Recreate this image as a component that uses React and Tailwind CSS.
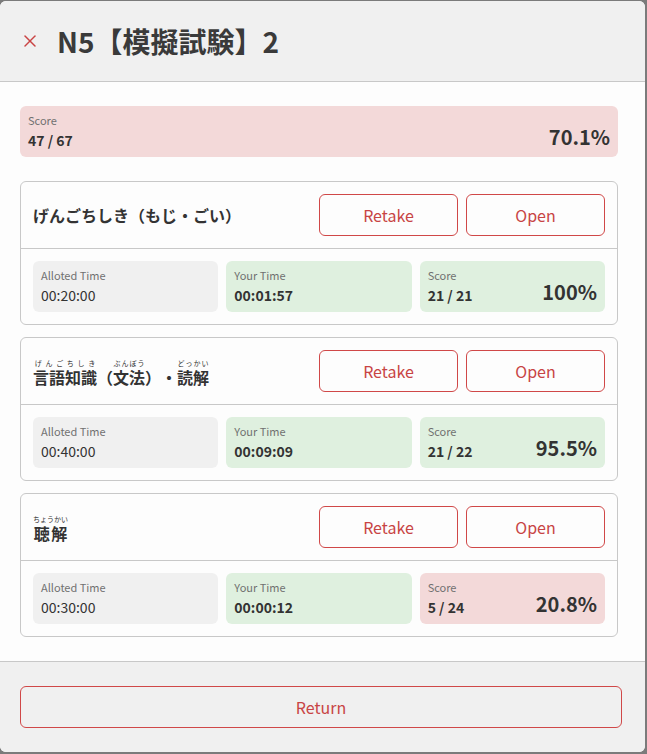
import { X } from 'lucide-react'

const sections = [
  {
    title: <>げんごちしき（もじ・ごい）</>,
    allotted: '00:20:00',
    yours: '00:01:57',
    score: '21 / 21',
    pct: '100%',
    pass: true,
  },
  {
    title: (
      <>
        <ruby>言語知識<rt>げんごちしき</rt></ruby>（<ruby>文法<rt>ぶんぽう</rt></ruby>）・<ruby>読解<rt>どっかい</rt></ruby>
      </>
    ),
    allotted: '00:40:00',
    yours: '00:09:09',
    score: '21 / 22',
    pct: '95.5%',
    pass: true,
  },
  {
    title: (
      <>
        <ruby>聴解<rt>ちょうかい</rt></ruby>
      </>
    ),
    allotted: '00:30:00',
    yours: '00:00:12',
    score: '5 / 24',
    pct: '20.8%',
    pass: false,
  },
]

function StatBox({ label, bg, children }) {
  return (
    <div className={`rounded-md px-2 pt-[7px] pb-[6px] h-[51px] ${bg}`}>
      <p className="text-[11px] leading-[14px] text-[#707070]">{label}</p>
      {children}
    </div>
  )
}

function ScoreRow({ score, pct }) {
  return (
    <div className="flex items-end justify-between -mt-[3px]">
      <p className="text-[14px] leading-[20px] font-bold text-[#333]">{score}</p>
      <p className="text-[20px] leading-[26px] font-bold text-[#333]">{pct}</p>
    </div>
  )
}

function Section({ s }) {
  return (
    <div className="rounded-md border border-[#c8c8c8] bg-[#fdfdfd]">
      <div className="flex items-center justify-between h-[67px] px-3 border-b border-[#c8c8c8]">
        <h3 className="text-[16px] font-bold text-[#333] leading-none [text-spacing-trim:space-all] [&_rt]:text-[7px] [&_rt]:font-normal [&_rt]:leading-[9px] [&_rt]:pb-[1px]">
          {s.title}
        </h3>
        <div className="flex gap-2">
          <button className="w-[139px] h-[42px] rounded-md border border-[#d04848] text-[#c84444] text-[16px]">Retake</button>
          <button className="w-[139px] h-[42px] rounded-md border border-[#d04848] text-[#c84444] text-[16px]">Open</button>
        </div>
      </div>
      <div className="grid grid-cols-3 gap-2 p-3">
        <StatBox label="Alloted Time" bg="bg-[#f0f0f0]">
          <p className="text-[14px] leading-[20px] mt-[3px] text-[#333]">{s.allotted}</p>
        </StatBox>
        <StatBox label="Your Time" bg="bg-[#dff0df]">
          <p className="text-[14px] leading-[20px] mt-[3px] font-bold text-[#333]">{s.yours}</p>
        </StatBox>
        <StatBox label="Score" bg={s.pass ? 'bg-[#dff0df]' : 'bg-[#f3d9d9]'}>
          <ScoreRow score={s.score} pct={s.pct} />
        </StatBox>
      </div>
    </div>
  )
}

export default function App() {
  return (
    <div className="min-h-screen bg-[#7b7b7b] pt-px" style={{ fontFamily: '"Noto Sans CJK JP", "Noto Sans", sans-serif' }}>
      <div className="w-[645px] h-[751px] flex flex-col rounded-md overflow-hidden bg-[#fdfdfd]">
        <header className="h-[81px] shrink-0 flex items-center gap-[17px] pl-5 bg-[#f0f0f0] border-b border-[#c8c8c8]">
          <X size={20} strokeWidth={1.8} className="text-[#c94444]" />
          <h1 className="text-[28px] font-bold text-[#3a3a3a] leading-none">N5【模擬試験】2</h1>
        </header>
        <main className="flex-1 pl-5 pr-[27px] pt-6 flex flex-col">
          <div className="rounded-md bg-[#f3d9d9] h-[51px] px-2 pt-[7px]">
            <p className="text-[11px] leading-[14px] text-[#707070]">Score</p>
            <ScoreRow score="47 / 67" pct="70.1%" />
          </div>
          <div className="flex flex-col gap-3 mt-6">
            {sections.map((s, i) => (
              <Section key={i} s={s} />
            ))}
          </div>
        </main>
        <footer className="h-[91px] shrink-0 bg-[#f0f0f0] border-t border-[#c8c8c8] px-5 pt-6">
          <button className="w-[602px] h-[42px] rounded-md border border-[#d04848] text-[#c84444] text-[16px]">Return</button>
        </footer>
      </div>
    </div>
  )
}
